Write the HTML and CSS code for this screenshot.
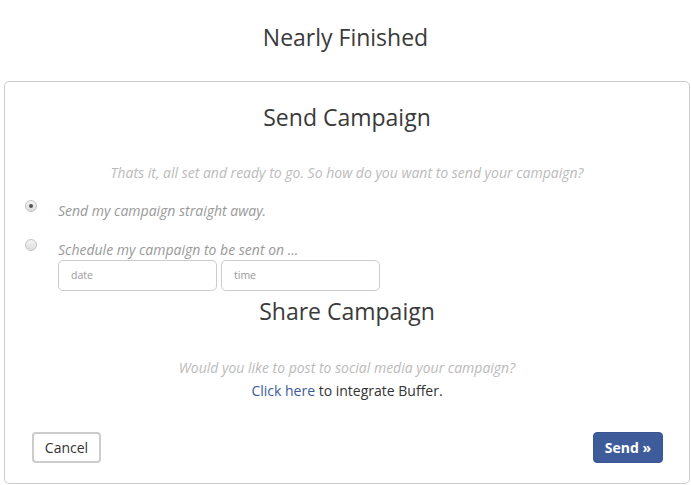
FILE: index.html
```html
<!DOCTYPE html>
<html>
<head>
<meta charset="utf-8">
<link rel="stylesheet" href="styles.css">
</head>
<body>
<h1 class="page-title">Nearly Finished</h1>
<div class="card">
  <h2 class="section-title">Send Campaign</h2>
  <p class="hint">Thats it, all set and ready to go. So how do you want to send your campaign?</p>
  <div class="option">
    <span class="radio checked"></span>
    <span class="option-label">Send my campaign straight away.</span>
  </div>
  <div class="option option-2">
    <span class="radio"></span>
    <div class="option-body">
      <span class="option-label">Schedule my campaign to be sent on ...</span>
      <div class="inputs">
        <div class="field">date</div>
        <div class="field">time</div>
      </div>
    </div>
  </div>
  <h2 class="section-title share">Share Campaign</h2>
  <p class="hint social">Would you like to post to social media your campaign?</p>
  <p class="integrate"><a class="link">Click here</a> to integrate Buffer.</p>
  <div class="actions">
    <button class="btn btn-cancel">Cancel</button>
    <button class="btn btn-send">Send »</button>
  </div>
</div>
</body>
</html>
```
FILE: styles.css
```css
* { box-sizing: border-box; }
body {
  margin: 0;
  font-family: "Open Sans", "Noto Sans", sans-serif;
  color: #333;
  background: #fff;
}
.page-title {
  margin: 0;
  padding-top: 21px;
  height: 81px;
  text-align: center;
  font-weight: 400;
  font-size: 23px;
  line-height: 32px;
  color: #3a3a3a;
}
.card {
  margin: 0 1px 0 4px;
  border: 1px solid #ccc;
  border-radius: 5px;
  height: 403px;
  padding: 0 26px 0 26px;
}
.section-title {
  margin: 0;
  padding-top: 19px;
  text-align: center;
  font-weight: 400;
  font-size: 23px;
  line-height: 32px;
  color: #3a3a3a;
}
.hint {
  margin: 0;
  text-align: center;
  font-style: italic;
  color: #bbb;
  font-size: 14px;
  line-height: 20px;
  padding-top: 30px;
}
.option {
  display: flex;
  align-items: flex-start;
  margin-top: 17px;
}
.option-2 { margin-top: 18px; }
.radio {
  width: 12px;
  height: 12px;
  border-radius: 50%;
  border: 1px solid #c4c4c4;
  background: linear-gradient(#f4f4f4, #dcdcdc);
  margin-top: 0px;
  margin-right: 21px;
  margin-left: -6px;
  position: relative;
  flex: none;
}
.radio.checked::after {
  content: "";
  position: absolute;
  left: 3px;
  top: 3px;
  width: 4px;
  height: 4px;
  border-radius: 50%;
  background: #555;
}
.option-label {
  font-style: italic;
  color: #999;
  font-size: 14px;
  line-height: 20px;
  display: block;
  padding-top: 1px;
}
.inputs {
  display: flex;
  gap: 4px;
  margin-top: 0;
}
.field {
  width: 159px;
  height: 31px;
  border: 1px solid #ccc;
  border-radius: 5px;
  font-size: 10.5px;
  color: #999;
  padding: 0 12px;
  line-height: 29px;
}
.section-title.share {
  padding-top: 0;
  line-height: 40px;
}
.social {
  padding-top: 27px;
}
.integrate {
  margin: 3px 0 0;
  text-align: center;
  font-size: 14px;
  line-height: 20px;
  color: #333;
}
.link { color: #3b5998; }
.actions {
  display: flex;
  justify-content: space-between;
  margin-top: 31px;
  padding-left: 1px;
}
.btn {
  font-family: "Open Sans", "Noto Sans", sans-serif;
  font-size: 14px;
  height: 31px;
  border-radius: 4px;
  padding: 0;
  white-space: nowrap;
  cursor: pointer;
}
.btn-cancel {
  background: #fff;
  border: 2px solid #ccc;
  color: #333;
  width: 69px;
}
.btn-send {
  background: #3e5b9a;
  border: 1px solid #3a5591;
  color: #fff;
  font-weight: 700;
  width: 70px;
}
```
